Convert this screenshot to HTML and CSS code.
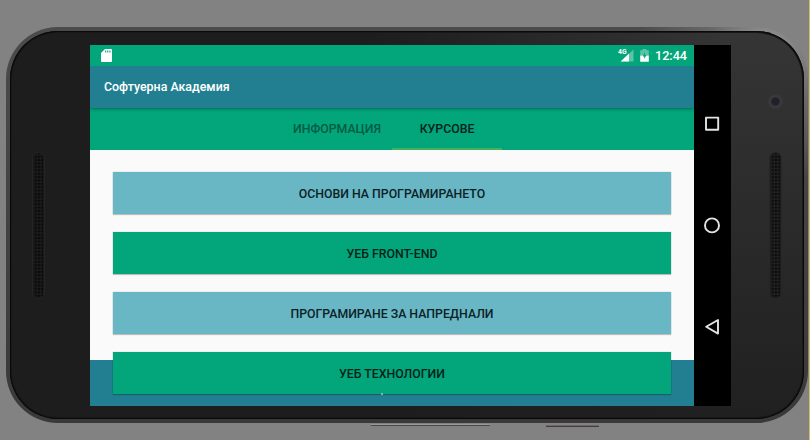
FILE: index.html
```html
<!DOCTYPE html>
<html lang="bg">
<head>
<meta charset="utf-8">
<title>Софтуерна Академия</title>
<link rel="stylesheet" href="styles.css">
</head>
<body>
<div class="phone">
  <div class="bezel bezel-left"><div class="speaker"></div></div>
  <div class="screen">
    <main class="app">
      <div class="status">
        <svg class="sd" width="11" height="13" viewBox="0 0 11 13"><path fill="#fff" d="M4 0h6q1 0 1 1v11q0 1-1 1H1q-1 0-1-1V4z"/><path stroke="#03a57b" stroke-width="1.1" d="M4.7 1.4v2.2M6.8 1.4v2.2M8.9 1.4v2.2"/></svg>
        <div class="status-right">
          <svg class="signal" width="16" height="14" viewBox="0 0 16 14"><path fill="#fff" fill-opacity=".35" d="M15.5.5v12H3z"/><path fill="#fff" d="M11 4.6v7.9H2.6z"/><text x="0" y="5.4" class="net">4G</text></svg>
          <svg class="battery" width="9" height="13" viewBox="0 0 9 13"><path fill="#fff" fill-opacity=".35" d="M2.5 0h4v1.2h1.8q.5 0 .5.5V6.5H.2V1.7q0-.5.5-.5h1.8z"/><path fill="#fff" d="M.2 6.5h8.6v5.8q0 .5-.5.5H.7q-.5 0-.5-.5z"/><path fill="#03a57b" d="M5 3 2.7 7.4h1.5v2.7l2.3-4.2H5z"/></svg>
          <span class="clock">12:44</span>
        </div>
      </div>
      <header class="appbar"><span class="title">Софтуерна Академия</span></header>
      <nav class="tabs">
        <a class="tab tab-info">ИНФОРМАЦИЯ</a>
        <a class="tab tab-active">КУРСОВЕ</a>
      </nav>
      <section class="content">
        <button class="course blue"><span>ОСНОВИ НА ПРОГРАМИРАНЕТО</span></button>
        <button class="course green"><span>УЕБ FRONT-END</span></button>
        <button class="course blue"><span>ПРОГРАМИРАНЕ ЗА НАПРЕДНАЛИ</span></button>
        <button class="course green last"><span>УЕБ ТЕХНОЛОГИИ</span></button>
      </section>
      <footer class="footer"></footer>
    </main>
    <aside class="navbar">
      <svg width="37" height="361" viewBox="0 0 37 361" fill="none" stroke="#e4e4e4" stroke-width="1.9" stroke-linejoin="round"><rect x="12" y="72.6" width="12.2" height="12.2"/><circle cx="18" cy="180.4" r="7"/><path d="M24 275v13.6L12.2 281.8z"/></svg>
    </aside>
  </div>
  <div class="bezel bezel-right">
    <div class="camera"></div>
    <div class="speaker speaker-right"></div>
  </div>
</div>
<div class="keys"><i class="key volume"></i><i class="key power"></i></div>
</body>
</html>
```
FILE: styles.css
```css
* { box-sizing: border-box; }
body {
  margin: 0;
  width: 810px;
  height: 440px;
  overflow: hidden;
  padding: 27px 0 0 6px;
  background: linear-gradient(#d3bd6c, #d3bd6c) right / 1px 100% no-repeat #828282;
  font-family: Roboto, "Noto Sans", sans-serif;
}
.phone {
  display: flex;
  width: 802px;
  height: 396px;
  border: 4px solid transparent;
  border-radius: 52px;
  background:
    linear-gradient(90deg, #1d1d1e 0 45%, transparent 90%) padding-box,
    linear-gradient(#353536, #202020) padding-box,
    radial-gradient(circle at 760px 28px, #a09fa0 0, #696768 60px, transparent 130px) border-box,
    linear-gradient(#4c4a4b, #3a3839) border-box;
  box-shadow: inset 0 0 0 1px #090909, inset 0 0 0 2px #181818;
}
.bezel { flex: none; }
.bezel-left { width: 80px; padding: 121px 0 0 22px; }
.bezel-right { width: 73px; padding: 63px 0 0 37px; }
.speaker {
  width: 13px;
  height: 147px;
  border-radius: 7px;
  border: 1px solid #252526;
  background: radial-gradient(circle at 50% 50%, #080808 0 .7px, transparent 1.2px) 1px 2px / 3.3px 3.4px #19191a;
}
.speaker-right { margin: 43px 0 0 1px; border-color: #272727; background-color: #1e1e1f; }
.camera {
  width: 15px;
  height: 15px;
  border-radius: 50%;
  background: radial-gradient(circle at 50% 50%, #20202c 0 3px, #29282c 4px, #3b3b3d 5px, #363638 7px);
}
.screen {
  display: flex;
  flex: none;
  width: 641px;
  height: 361px;
  margin-top: 14px;
}
.app { display: flex; flex-direction: column; width: 604px; }
.status {
  display: flex;
  justify-content: space-between;
  height: 21px;
  padding: 4px 7px 0 11px;
  background: #03a57b;
}
.status-right { display: flex; height: 14px; }
.signal { margin-right: 6px; }
.net { font: 700 6.8px Roboto, sans-serif; fill: #fff; }
.battery { margin-right: 6px; }
.clock { width: 32px; color: #fff; font-size: 12.6px; font-weight: 500; line-height: 14px; white-space: nowrap; }
.appbar {
  position: relative;
  display: flex;
  align-items: center;
  height: 42px;
  padding-left: 14px;
  background: #217f91;
  box-shadow: 0 1px 3px rgba(0, 0, 0, .35);
  color: #fff;
  clip-path: inset(0 0 -5px 0);
}
.title { font-size: 12.4px; line-height: 14px; font-weight: 500; white-space: nowrap; }
.tabs { display: flex; justify-content: center; height: 42px; background: #03a57b; }
.tab {
  display: flex;
  align-items: center;
  justify-content: center;
  width: 110px;
  padding-top: 1px;
  border-bottom: 2px solid transparent;
  color: #025c43;
  font-size: 12.3px;
  font-weight: 500;
}
.tab-active { border-color: #42b35c; color: #07211a; }
.content {
  position: relative;
  display: flex;
  flex-direction: column;
  gap: 18px;
  height: 210px;
  padding: 22px 23px 0;
  background: #fafafa;
}
.course {
  flex: none;
  height: 42px;
  padding: 1px 0 0;
  border: 0;
  box-shadow: 0 1px 1px rgba(0, 0, 0, .2), 0 0 1px rgba(0, 0, 0, .3);
  color: #0b2225;
  font: 500 12.3px Roboto, "Noto Sans", sans-serif;
}
.blue { background: #69b6c5; }
.green { background: #03a57b; color: #032219; }
.last { position: relative; }
.last::after {
  content: "";
  position: absolute;
  left: 268px;
  top: 41px;
  width: 2px;
  height: 2px;
  background: #7fb3b5;
}
.footer { height: 46px; background: #217f91; }
.navbar { width: 37px; background: #000; }
.navbar svg { display: block; }
.keys { display: flex; align-items: flex-start; gap: 56px; padding: 1px 0 0 365px; }
.key { display: block; height: 2px; }
.volume { width: 119px; border-top: 1px solid #999; border-bottom: 1px solid #4a4849; }
.power { width: 53px; margin-top: 1px; border-top: 1px solid #6b696a; border-bottom: 1px solid #403e3f; }
```
